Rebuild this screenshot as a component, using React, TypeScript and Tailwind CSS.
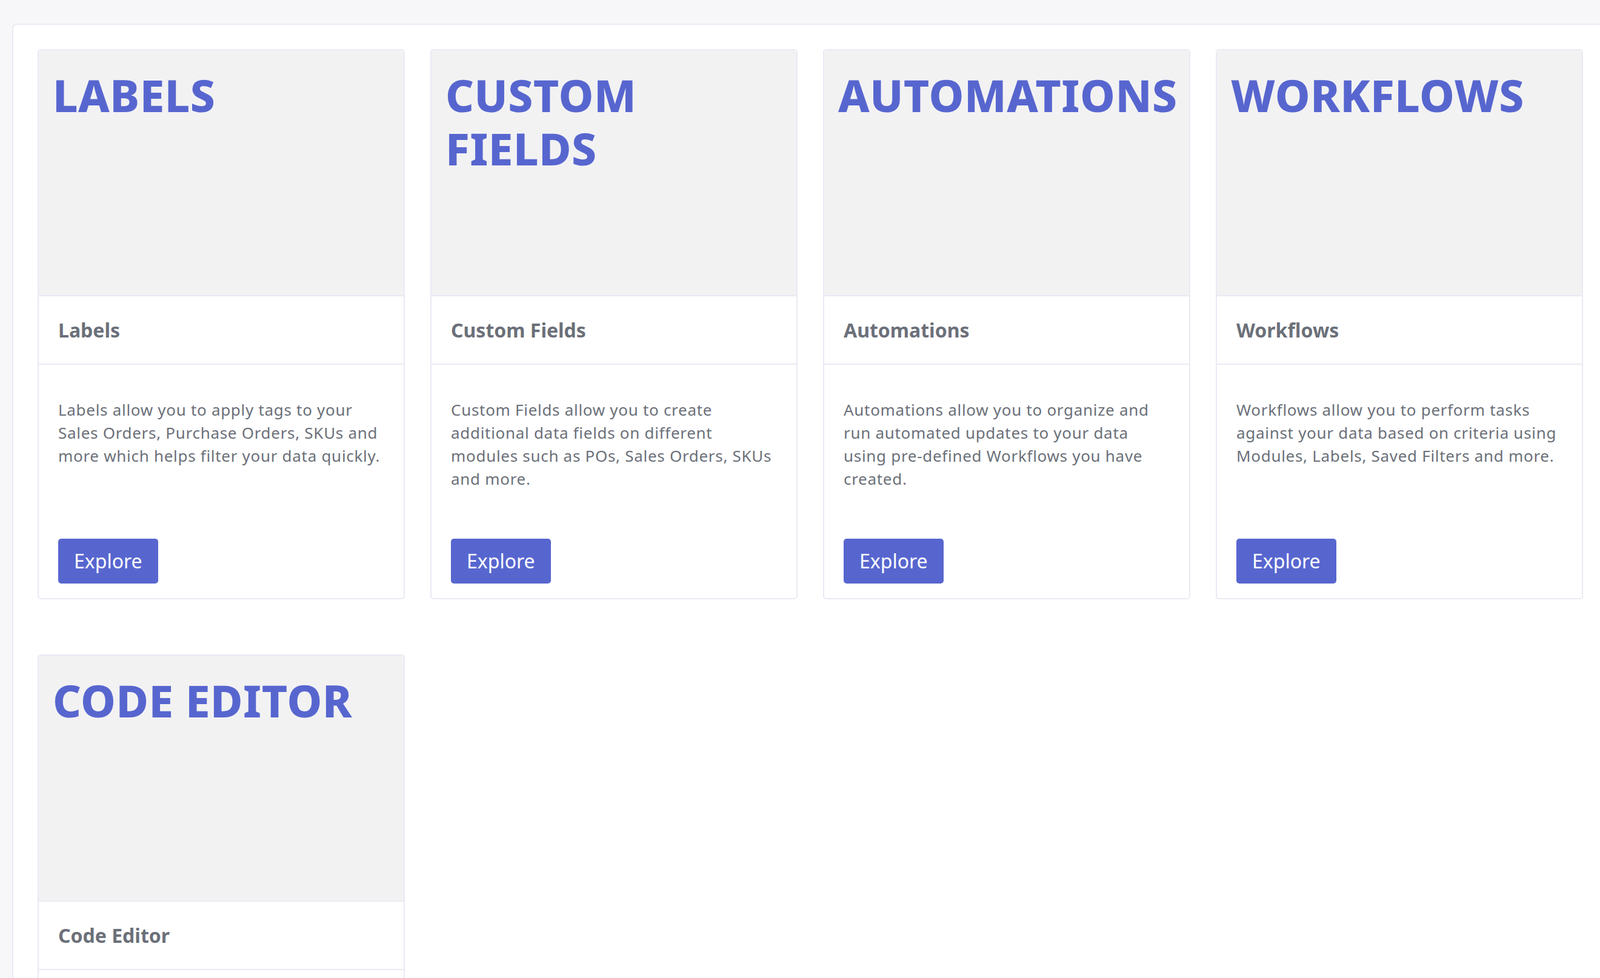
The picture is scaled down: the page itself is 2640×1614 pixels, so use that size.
const cards = [
  {
    big: 'LABELS',
    title: 'Labels',
    body: 'Labels allow you to apply tags to your Sales Orders, Purchase Orders, SKUs and more which helps filter your data quickly.',
  },
  {
    big: 'CUSTOM FIELDS',
    title: 'Custom Fields',
    body: 'Custom Fields allow you to create additional data fields on different modules such as POs, Sales Orders, SKUs and more.',
  },
  {
    big: 'AUTOMATIONS',
    title: 'Automations',
    body: 'Automations allow you to organize and run automated updates to your data using pre-defined Workflows you have created.',
  },
  {
    big: 'WORKFLOWS',
    title: 'Workflows',
    body: 'Workflows allow you to perform tasks against your data based on criteria using Modules, Labels, Saved Filters and more.',
  },
  {
    big: 'CODE EDITOR',
    title: 'Code Editor',
    body: '',
  },
];

function FeatureCard({ big, title, body }: { big: string; title: string; body: string }) {
  return (
    <div className="flex flex-col rounded-[5px] border-2 border-[#e9eaf3] bg-white">
      <div className="h-[404px] rounded-t-[5px] bg-[#f2f2f3] px-[23px] pt-[30px]">
        <h2 className="text-[73px] font-extrabold uppercase leading-[88px] tracking-[0.5px] text-[#5766cf]">{big}</h2>
      </div>
      <div className="flex h-[115px] items-center border-y-2 border-[#e9eaf3] px-[32px]">
        <h3 className="text-[32px] font-bold text-[#6b7079]">{title}</h3>
      </div>
      <div className="flex flex-1 flex-col items-start px-[32px] pb-[24px] pt-[55px]">
        <p className="mb-[80px] text-[26px] leading-[38px] tracking-[0.7px] text-[#6b7079]">{body}</p>
        <button className="mt-auto rounded-[5px] bg-[#5766cf] px-[26px] py-[12px] text-[32px] leading-[50px] text-white">
          Explore
        </button>
      </div>
    </div>
  );
}

export default function App() {
  return (
    <div className="h-[1614px] overflow-hidden bg-[#f7f7f9] pl-[20px] pt-[39px] font-['Inter',sans-serif]">
      <div className="min-h-[1575px] rounded-tl-[8px] border-2 border-r-0 border-[#e9eaf3] bg-white pl-[40px] pr-[28px] pt-[40px]">
        <div className="grid grid-cols-4 gap-x-[42px] gap-y-[91px]">
          {cards.map((c) => (
            <FeatureCard key={c.big} {...c} />
          ))}
        </div>
      </div>
    </div>
  );
}
